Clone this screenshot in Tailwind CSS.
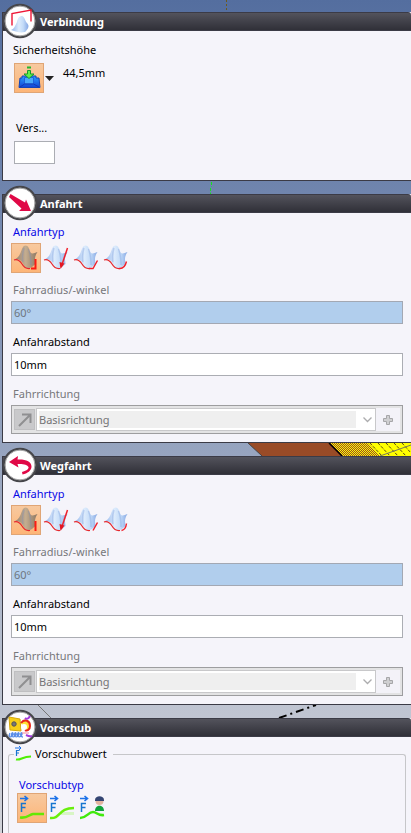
<!DOCTYPE html>
<html lang="de">
<head>
<meta charset="utf-8">
<meta name="viewport" content="width=device-width, initial-scale=1">
<title>Verbindung</title>
<script src="https://cdn.jsdelivr.net/npm/@tailwindcss/browser@4"></script>
</head>
<body class="h-screen overflow-hidden bg-linear-to-b from-[#546e9f] to-[#d3d4da] font-['Noto_Sans','Open_Sans',sans-serif] text-[11px] leading-4 text-black">
<svg class="absolute h-0 w-0" aria-hidden="true">
  <defs>
    <linearGradient id="gBell" x1="0" x2="1"><stop offset="0" stop-color="#8fb2ea"/><stop offset=".45" stop-color="#dcebfc"/><stop offset=".7" stop-color="#c3dbf8"/><stop offset="1" stop-color="#86a8e4"/></linearGradient>
    <linearGradient id="gBrown" x1="0" x2="1"><stop offset="0" stop-color="#94806f"/><stop offset=".5" stop-color="#c4ad90"/><stop offset="1" stop-color="#8c7763"/></linearGradient>
    <linearGradient id="gBlue" x1="0" x2="0" y1="0" y2="1"><stop offset="0" stop-color="#2aa0ff"/><stop offset="1" stop-color="#1243d6"/></linearGradient>
  </defs>
  <symbol id="bell" viewBox="0 0 30 30">
    <path d="M3 16.500C6 15.500 8 13.500 9.500 10 11 6 12 2.500 14.500 2.500 17.500 2.500 18 6 19 8.500 20 11 22 11 26.500 9 24.500 12 24 14 24 16.500L24.500 21C22 23 20 25.500 17 25.500 13.500 25 12.500 21 10.500 18.500 8.500 16 6 16 3 16.500z"/>
    <path d="M13 5c-1.500 5-2 9-1 14" fill="none" stroke="#5f84cf" stroke-opacity=".25" stroke-width="1.500"/>
    <path d="M17.500 6c2 5 2.500 10 2.500 16" fill="none" stroke="#5f84cf" stroke-opacity=".25" stroke-width="1.500"/>
    <path d="M3 17c4-1.500 6 1 8 4 2 3.500 4 5 8 4.500" fill="none" stroke="#e5282d" stroke-width="1.200"/>
  </symbol>
  <symbol id="feed" viewBox="0 0 30 30">
    <path d="M3 5.500h7M7.500 3l3 2.500-3 2.500" fill="none" stroke="#1c72e8" stroke-width="1.600"/>
    <path d="M4.500 19v-8.500H9M4.500 14.500H8.500" fill="none" stroke="#1675cf" stroke-width="1.500"/>
  </symbol>
</svg>

<main class="flex h-full flex-col gap-[13px] pt-3 pl-0.5">

  <!-- Verbindung -->
  <section class="relative h-[169px] shrink-0 border-b border-l border-[#3b3b46] bg-[#f5f4fa]">
    <svg class="absolute -top-3 left-[222px] h-3 w-3" viewBox="0 0 12 12"><path d="M1.500 0v12" stroke="#6d5a1c" stroke-dasharray="2 2"/></svg>
    <header class="flex h-[19px] items-center rounded-tr-[3px] border-y border-[#3b3b46] bg-linear-to-b from-[#53535c] to-[#303038] pl-[37px]">
      <h2 class="font-bold text-white">Verbindung</h2>
    </header>
    <svg class="absolute -top-[9px] -left-px h-9 w-9" viewBox="0 0 36 36"><circle cx="18" cy="18" r="16" fill="#fff" stroke="#46464a" stroke-width="2.500"/><circle cx="18" cy="18" r="15" fill="none" stroke="#aaa"/><path d="M9 27c3-1 4-4 6-8 1-4 2-6 5-6 3 1 3 5 5 7 3 3 1 6-2 9-5 1-8 0-14-2z" fill="url(#gBell)"/><path d="M10 22.500V10.500L29 7v11.500" fill="none" stroke="#ee1737" stroke-width="1.400"/></svg>
    <div class="px-2.5 pt-[11px]">
      <h3>Sicherheitshöhe</h3>
      <div class="mt-[5px] flex">
        <button aria-label="Sicherheitshöhe wählen" class="ml-px h-[30px] w-[30px] border border-[#e0a575] bg-linear-to-b from-[#f7c99f] to-[#fdb577]">
          <svg class="h-7 w-7" viewBox="0 0 28 28"><path d="M7 12h14v2h3l1 9.500H4L5 14h2z" fill="url(#gBlue)" stroke="#1544b5"/><path d="M9.500 13.500h9V20h-9z" fill="#48a8fa" stroke="#1f62dc"/><path d="M5 23l4.500-3h9l5.500 3" fill="none" stroke="#1239b4"/><path d="M12.500 6.500h3V10H19l-5 4.500L9 10h3.500z" fill="#60f04b" stroke="#179b2c"/><path d="M12 3.500h4" stroke="#25b52f" stroke-width="2"/></svg>
        </button>
        <button aria-label="Weitere Optionen" class="flex h-[30px] w-2.5 items-center justify-center"><svg class="h-[5px] w-[9px]" viewBox="0 0 9 5"><path d="M0 0h9L4.500 5z" fill="#222"/></svg></button>
        <span class="ml-[9px] pt-0.5">44,5mm</span>
      </div>
      <label for="vers" class="mt-[27px] ml-[3px] block">Vers...</label>
      <input id="vers" class="mt-[5px] ml-px block h-[23px] w-[41px] border border-[#abadb3] bg-white px-1 outline-none">
    </div>
  </section>

  <!-- Anfahrt -->
  <section class="relative shrink-0 border-b border-l border-[#3b3b46] bg-[#f5f4fa]">
    <svg class="absolute -top-3 left-[206px] h-3 w-3" viewBox="0 0 12 12"><path d="M2.500 0v5M1.500 6v6" stroke="#12e51c" stroke-dasharray="3 1.500"/></svg>
    <header class="flex h-[19px] items-center rounded-tr-[3px] border-y border-[#3b3b46] bg-linear-to-b from-[#53535c] to-[#303038] pl-[37px]">
      <h2 class="font-bold text-white">Anfahrt</h2>
    </header>
    <svg class="absolute -top-[9px] -left-px h-9 w-9" viewBox="0 0 36 36"><circle cx="18" cy="18" r="16" fill="#fff" stroke="#46464a" stroke-width="2.500"/><circle cx="18" cy="18" r="15" fill="none" stroke="#aaa"/><path d="M7 12l1.500-3L23 17.500l1-3L29 26H17l2.500-2.500z" fill="#e00846"/></svg>
    <div class="px-2 pt-2 pb-2">
      <h3 class="flex h-[22px] items-center pl-0.5 text-[#0808e6]">Anfahrtyp</h3>
      <div class="flex">
        <button aria-label="Senkrecht" class="h-[30px] w-[30px] border border-[#e0a575] bg-linear-to-b from-[#f7c99f] to-[#fdb577]"><svg class="h-7 w-7" viewBox="1 1 28 28"><use href="#bell" width="30" height="30" fill="url(#gBrown)"/><path d="M20 25.500h4.500V16" fill="none" stroke="#fb1b12" stroke-width="2"/></svg></button>
        <button aria-label="Schräg von oben" class="h-[30px] w-[30px]"><svg class="h-[30px] w-[30px]" viewBox="0 0 30 30"><use href="#bell" width="30" height="30" fill="url(#gBell)"/><path d="M26.500 5L20.500 23" stroke="#f0202b" stroke-width="1.500"/><path d="M18.500 19l5 1.500L19.500 26z" fill="#e41722"/></svg></button>
        <button aria-label="Gerade" class="h-[30px] w-[30px]"><svg class="h-[30px] w-[30px]" viewBox="0 0 30 30"><use href="#bell" width="30" height="30" fill="url(#gBell)"/><path d="M18 25.500h4L26.500 17.500" fill="none" stroke="#f0202b" stroke-width="1.400"/></svg></button>
        <button aria-label="Bogen" class="h-[30px] w-[30px]"><svg class="h-[30px] w-[30px]" viewBox="0 0 30 30"><use href="#bell" width="30" height="30" fill="url(#gBell)"/><path d="M18 25.500c4 .5 6.500-3 7.500-7" fill="none" stroke="#f0202b" stroke-width="1.400"/></svg></button>
      </div>
      <label for="r1" class="mt-1.5 flex h-[22px] items-center pl-0.5 text-[#77777b]">Fahrradius/-winkel</label>
      <input id="r1" disabled value="60°" class="block h-[23px] w-full border border-[#a3a8b3] bg-[#b1ceed] px-0.5 pb-px text-[#6f7680]">
      <label for="a1" class="mt-[7px] flex h-[22px] items-center pl-0.5">Anfahrabstand</label>
      <input id="a1" value="10mm" class="block h-[23px] w-full border border-[#abadb3] bg-white px-0.5 pb-px outline-none">
      <label for="f1" class="mt-[7px] flex h-[22px] items-center pl-0.5 text-[#77777b]">Fahrrichtung</label>
      <div class="flex h-[29px] items-stretch border border-[#9d9d9f] bg-[#e3e3e4] p-0.5">
        <button disabled aria-label="Richtung" class="my-px flex w-[21px] items-center justify-center border border-[#bfbfc1] bg-[#c9c9cb]"><svg class="h-4 w-4" viewBox="0 0 16 16"><path d="M2 14L13 3M5 2.500h8.500V11" fill="none" stroke="#8f8f91" stroke-width="2"/></svg></button>
        <div class="relative ml-px flex-1 border border-[#c8c8ca] bg-white p-0.5 pr-[19px]">
          <select id="f1" disabled class="block h-full w-full appearance-none bg-[#efefef] text-[#747476] opacity-100"><option>Basisrichtung</option></select>
          <svg class="absolute top-2 right-[3px] h-[6px] w-[9px]" viewBox="0 0 9 6"><path d="M.5.5l4 4 4-4" fill="none" stroke="#acacae" stroke-width="1.300"/></svg>
        </div>
        <button disabled aria-label="Hinzufügen" class="flex w-6 items-center justify-center bg-[#f3f2f8]"><svg class="h-2.5 w-2.5" viewBox="0 0 10 10"><path d="M3.500.5h3v3h3v3h-3v3h-3v-3h-3v-3h3z" fill="#cfcfd1" stroke="#a6a6a8"/></svg></button>
      </div>
    </div>
  </section>

  <!-- Wegfahrt -->
  <section class="relative shrink-0 border-b border-l border-[#3b3b46] bg-[#f5f4fa]">
    <svg class="absolute -top-[13px] right-0 h-[13px] w-[163px]" viewBox="0 0 163 13">
      <defs><pattern id="dots" width="2" height="2" patternUnits="userSpaceOnUse"><path d="M0 0h2v2H0z" fill="#ff0"/><path d="M0 0h1v1H0zM1 1h1v1H1z" fill="#994b27"/></pattern></defs>
      <path d="M0 0h163v13H14z" fill="#994b27"/><path d="M81 0h82v13H94z" fill="#ff0"/><path d="M81 0h39l12 13H94z" fill="url(#dots)"/>
      <path d="M122 0l12 13M130 0l12 13M138 0l12 13M146 0l12 13M154 0l9 10" stroke="#5b4512" stroke-dasharray="3 1.500"/>
      <path d="M132 13l31-11" stroke="#77775e"/><path d="M81 0l13 13" stroke="#000" stroke-width="1.500"/><path d="M0 0l14 13" stroke="#444"/>
    </svg>
    <header class="flex h-[19px] items-center border-y border-[#3b3b46] bg-linear-to-b from-[#53535c] to-[#303038] pl-[37px]">
      <h2 class="font-bold text-white">Wegfahrt</h2>
    </header>
    <svg class="absolute -top-[9px] -left-px h-9 w-9" viewBox="0 0 36 36"><circle cx="18" cy="18" r="16" fill="#fff" stroke="#46464a" stroke-width="2.500"/><circle cx="18" cy="18" r="15" fill="none" stroke="#aaa"/><path d="M7 15l9-6-.5 3.500c8-.5 14 2 14 7 0 4-4 7-9 8l-.5-2.500c4-1 7-3 6.500-5-1-2.500-6-3.500-11-3l1 3.500z" fill="#e00846"/></svg>
    <div class="px-2 pt-2 pb-2">
      <h3 class="flex h-[22px] items-center pl-0.5 text-[#0808e6]">Anfahrtyp</h3>
      <div class="flex">
        <button aria-label="Senkrecht" class="h-[30px] w-[30px] border border-[#e0a575] bg-linear-to-b from-[#f7c99f] to-[#fdb577]"><svg class="h-7 w-7" viewBox="1 1 28 28"><use href="#bell" width="30" height="30" fill="url(#gBrown)"/><path d="M24.500 26V16" fill="none" stroke="#fb1b12" stroke-width="2"/></svg></button>
        <button aria-label="Schräg von oben" class="h-[30px] w-[30px]"><svg class="h-[30px] w-[30px]" viewBox="0 0 30 30"><use href="#bell" width="30" height="30" fill="url(#gBell)"/><path d="M26.500 5L20.500 23" stroke="#f0202b" stroke-width="1.500"/><path d="M18.500 19l5 1.500L19.500 26z" fill="#e41722"/></svg></button>
        <button aria-label="Gerade" class="h-[30px] w-[30px]"><svg class="h-[30px] w-[30px]" viewBox="0 0 30 30"><use href="#bell" width="30" height="30" fill="url(#gBell)"/><path d="M22 25.500L26.500 17.500" fill="none" stroke="#f0202b" stroke-width="1.400"/></svg></button>
        <button aria-label="Bogen" class="h-[30px] w-[30px]"><svg class="h-[30px] w-[30px]" viewBox="0 0 30 30"><use href="#bell" width="30" height="30" fill="url(#gBell)"/><path d="M20.500 25.500c3-.5 4.500-3 5-7" fill="none" stroke="#f0202b" stroke-width="1.400"/></svg></button>
      </div>
      <label for="r2" class="mt-1.5 flex h-[22px] items-center pl-0.5 text-[#77777b]">Fahrradius/-winkel</label>
      <input id="r2" disabled value="60°" class="block h-[23px] w-full border border-[#a3a8b3] bg-[#b1ceed] px-0.5 pb-px text-[#6f7680]">
      <label for="a2" class="mt-[7px] flex h-[22px] items-center pl-0.5">Anfahrabstand</label>
      <input id="a2" value="10mm" class="block h-[23px] w-full border border-[#abadb3] bg-white px-0.5 pb-px outline-none">
      <label for="f2" class="mt-[7px] flex h-[22px] items-center pl-0.5 text-[#77777b]">Fahrrichtung</label>
      <div class="flex h-[29px] items-stretch border border-[#9d9d9f] bg-[#e3e3e4] p-0.5">
        <button disabled aria-label="Richtung" class="my-px flex w-[21px] items-center justify-center border border-[#bfbfc1] bg-[#c9c9cb]"><svg class="h-4 w-4" viewBox="0 0 16 16"><path d="M2 14L13 3M5 2.500h8.500V11" fill="none" stroke="#8f8f91" stroke-width="2"/></svg></button>
        <div class="relative ml-px flex-1 border border-[#c8c8ca] bg-white p-0.5 pr-[19px]">
          <select id="f2" disabled class="block h-full w-full appearance-none bg-[#efefef] text-[#747476] opacity-100"><option>Basisrichtung</option></select>
          <svg class="absolute top-2 right-[3px] h-[6px] w-[9px]" viewBox="0 0 9 6"><path d="M.5.5l4 4 4-4" fill="none" stroke="#acacae" stroke-width="1.300"/></svg>
        </div>
        <button disabled aria-label="Hinzufügen" class="flex w-6 items-center justify-center bg-[#f3f2f8]"><svg class="h-2.5 w-2.5" viewBox="0 0 10 10"><path d="M3.500.5h3v3h3v3h-3v3h-3v-3h-3v-3h3z" fill="#cfcfd1" stroke="#a6a6a8"/></svg></button>
      </div>
    </div>
  </section>

  <!-- Vorschub -->
  <section class="relative flex flex-1 flex-col border-l border-[#3b3b46] bg-[#f5f4fa]">
    <svg class="absolute -top-[13px] left-[35px] h-[13px] w-[290px]" viewBox="0 0 290 13"><path d="M0 0l13 13" stroke="#777"/><path d="M241 13l37-13" stroke="#000" stroke-width="2" stroke-dasharray="8 4 2 4"/></svg>
    <header class="flex h-[19px] shrink-0 items-center rounded-tr-[3px] border-y border-[#3b3b46] bg-linear-to-b from-[#53535c] to-[#303038] pl-[37px]">
      <h2 class="font-bold text-white">Vorschub</h2>
    </header>
    <svg class="absolute -top-[9px] -left-px h-9 w-9" viewBox="0 0 36 36"><circle cx="18" cy="18" r="16" fill="#fff" stroke="#46464a" stroke-width="2.500"/><circle cx="18" cy="18" r="15" fill="none" stroke="#aaa"/><path d="M7 8l11 2 1 12-11-1z" fill="#f7cf18" stroke="#d6a80c"/><circle cx="12" cy="15" r="2.200" fill="#777" stroke="#555"/><path d="M19 14c4-5 9-2 9 3 0 4-3 5-5 4" fill="#ffe238" stroke="#e8271b" stroke-width="2"/><circle cx="22" cy="18" r="3" fill="#fff"/><path d="M23 9c2 2 4 0 5-2M24 26c2 1 4 2 6 1" fill="none" stroke="#a239dc" stroke-width="2"/><path d="M8 24c-2 3 0 5 2 3s1-4 0-3c-2 3 1 5 3 3s1-4 0-3c-2 3 1 5 3 3s1-4 0-3c-2 3 1 5 3 3s1-4 0-3c-1 2 0 4 2 4" fill="none" stroke="#5a8de8" stroke-width="1.300"/><path d="M20 24h7" stroke="#f5849a"/></svg>
    <fieldset class="mx-[5px] mt-[9px] flex-1 rounded-t-[3px] border border-b-0 border-[#c6c6c9] px-2">
      <legend class="-ml-[3px] flex items-center gap-[3px] pr-1.5 pl-px">
        <svg class="h-4 w-[17px]" viewBox="0 1 17 16"><path d="M0 3h6M4 1l2 2-2 2" fill="none" stroke="#1c72e8"/><path d="M1.500 11V5.500h3M1.500 8h2.500" fill="none" stroke="#1675cf" stroke-width="1.200"/><path d="M1 14.500c5 1 6-3 15-3" fill="none" stroke="#50ef05" stroke-width="2"/></svg>
        <span>Vorschubwert</span>
      </legend>
      <h3 class="mt-[15px] flex h-4 items-center pl-0.5 text-[#0808e6]">Vorschubtyp</h3>
      <div class="flex">
        <button aria-label="Konstanter Vorschub" class="h-[30px] w-[30px] border border-[#e0a575] bg-linear-to-b from-[#f7c99f] to-[#fdb577]"><svg class="h-7 w-7" viewBox="1 1 28 28"><use href="#feed" width="30" height="30"/><path d="M3 24.500c8 1 9-3 13-3.500h11" fill="none" stroke="#64e804" stroke-width="2.500"/></svg></button>
        <button aria-label="Ansteigender Vorschub" class="h-[30px] w-[30px]"><svg class="h-[30px] w-[30px]" viewBox="0 0 30 30"><use href="#feed" width="30" height="30"/><path d="M14 20.500h13" stroke="#d8f5c5" stroke-width="3"/><path d="M3 25c11 1 8-10 24-10" fill="none" stroke="#68ef0c" stroke-width="2.500"/></svg></button>
        <button aria-label="Benutzerdefinierter Vorschub" class="h-[30px] w-[30px]"><svg class="h-[30px] w-[30px]" viewBox="0 0 30 30"><use href="#feed" width="30" height="30"/><path d="M18 18c0-7 9-7 9 0z" fill="#10a33c"/><circle cx="22.500" cy="8" r="4" fill="#e3b4a0"/><path d="M18 7c0-5 9-5 9 0v1h-9z" fill="#344573"/><path d="M3 25c7 0 8-6 13-6 4 0 5 4 11 3" fill="none" stroke="#40ea0d" stroke-width="2.500"/></svg></button>
      </div>
    </fieldset>
  </section>
</main>
</body>
</html>
